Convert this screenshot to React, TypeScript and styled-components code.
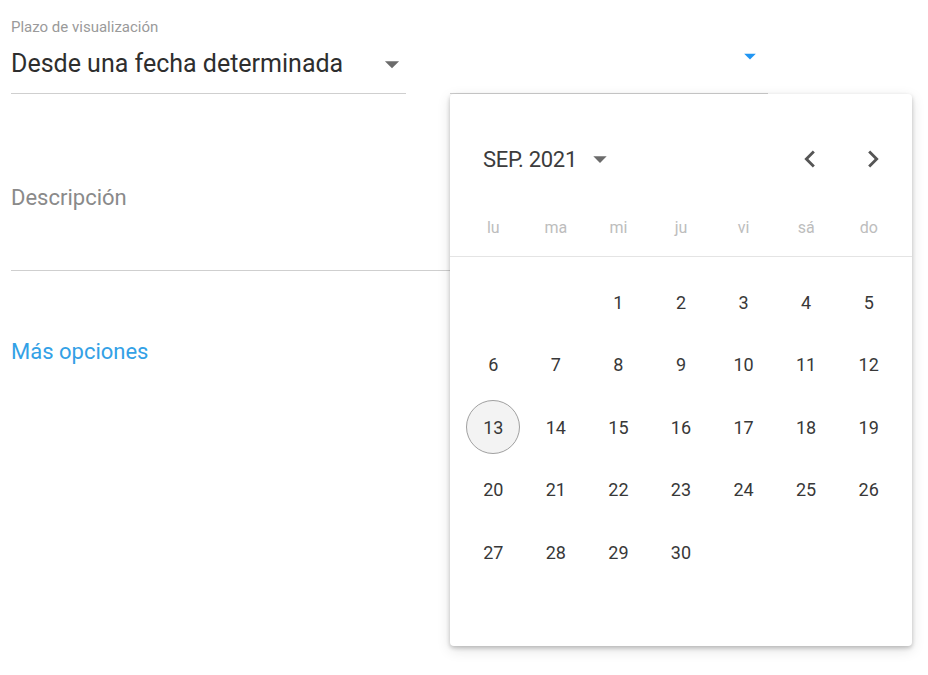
import React from "react";
import styled, { createGlobalStyle } from "styled-components";

const Global = createGlobalStyle`
  html, body { margin: 0; padding: 0; background: #fff; }
  body { font-family: Roboto, "Noto Sans", Arial, sans-serif; -webkit-font-smoothing: antialiased; }
  * { box-sizing: border-box; }
`;

const Page = styled.div`
  position: relative;
  width: 928px;
  height: 675px;
  padding: 18px 0 0 11px;
  overflow: hidden;
`;

const Label = styled.div`
  font-size: 15px;
  line-height: 18px;
  color: #9a9a9a;
`;

const FieldRow = styled.div`
  display: flex;
  align-items: flex-end;
`;

const SelectField = styled.div<{ $width: number; $ml?: number }>`
  position: relative;
  width: ${(p) => p.$width}px;
  margin-left: ${(p) => p.$ml ?? 0}px;
  height: 58px;
  display: flex;
  align-items: flex-start;
  justify-content: space-between;
  padding-top: 14px;
  border-bottom: 1px solid #cfcfcf;
`;

const SelectText = styled.div`
  font-size: 25px;
  line-height: 28px;
  color: #2e2e2e;
`;

const ArrowBox = styled.div<{ $top: number; $right: number }>`
  position: absolute;
  top: ${(p) => p.$top}px;
  right: ${(p) => p.$right}px;
  display: flex;
`;

const DescField = styled.div`
  width: 757px;
  height: 177px;
  padding-top: 91px;
  border-bottom: 1px solid #cfcfcf;
  font-size: 22px;
  line-height: 26px;
  color: #8a8a8a;
`;

const MoreLink = styled.a`
  display: block;
  margin-top: 68px;
  font-size: 22px;
  line-height: 26px;
  color: #33a1e6;
  text-decoration: none;
  cursor: pointer;
`;

const Popup = styled.div`
  position: absolute;
  left: 450px;
  top: 94px;
  width: 462px;
  height: 552px;
  background: #fff;
  border-radius: 4px;
  box-shadow: 0 2px 4px rgba(0, 0, 0, 0.22), 0 4px 14px rgba(0, 0, 0, 0.12);
  display: flex;
  flex-direction: column;
`;

const Header = styled.div`
  height: 40px;
  margin-top: 45px;
  padding: 0 22px 0 33px;
  display: flex;
  align-items: center;
`;

const MonthButton = styled.div`
  display: flex;
  align-items: center;
  gap: 7px;
  font-size: 22px;
  color: #3c3c3c;
  letter-spacing: -0.3px;
`;

const NavGroup = styled.div`
  margin-left: auto;
  display: flex;
  gap: 29px;
`;

const NavButton = styled.div`
  width: 34px;
  height: 34px;
  display: flex;
  align-items: center;
  justify-content: center;
`;

const WeekRow = styled.div`
  margin-top: 28px;
  height: 40px;
  padding: 0 12px 9px;
  display: grid;
  grid-template-columns: repeat(7, 1fr);
  align-items: center;
  border-bottom: 1px solid #e4e4e4;
  box-sizing: content-box;
`;

const WeekDay = styled.div`
  text-align: center;
  font-size: 16px;
  color: #bdbdbd;
`;

const DaysGrid = styled.div`
  padding: 14px 12px 0;
  display: grid;
  grid-template-columns: repeat(7, 1fr);
  grid-auto-rows: 62.5px;
`;

const DayCell = styled.div`
  display: flex;
  align-items: center;
  justify-content: center;
`;

const Day = styled.div<{ $selected?: boolean }>`
  width: 54px;
  height: 54px;
  border-radius: 50%;
  display: flex;
  align-items: center;
  justify-content: center;
  font-size: 18px;
  color: #383838;
  background: ${(p) => (p.$selected ? "#f3f3f3" : "transparent")};
  border: 1px solid ${(p) => (p.$selected ? "#a0a0a0" : "transparent")};
`;

const DropArrow = ({ size, color }: { size: number; color: string }) => (
  <svg width={size} height={size} viewBox="0 0 24 24">
    <path d="M7 10l5 5 5-5z" fill={color} />
  </svg>
);

const ChevronLeft = () => (
  <svg width="34" height="34" viewBox="0 0 24 24">
    <path d="M15.41 7.41L14 6l-6 6 6 6 1.41-1.41L10.83 12z" fill="#555" />
  </svg>
);

const ChevronRight = () => (
  <svg width="34" height="34" viewBox="0 0 24 24">
    <path d="M10 6L8.59 7.41 13.17 12l-4.58 4.59L10 18l6-6z" fill="#555" />
  </svg>
);

const weekDays = ["lu", "ma", "mi", "ju", "vi", "sá", "do"];
const days: (number | null)[] = [null, null, ...Array.from({ length: 30 }, (_, i) => i + 1)];

export default function App() {
  return (
    <>
      <Global />
      <Page>
        <Label>Plazo de visualización</Label>
        <FieldRow>
          <SelectField $width={395}>
            <SelectText>Desde una fecha determinada</SelectText>
            <ArrowBox $top={11} $right={-3}>
              <DropArrow size={34} color="#6b6b6b" />
            </ArrowBox>
          </SelectField>
          <SelectField $width={318} $ml={44}>
            <ArrowBox $top={6} $right={4}>
              <DropArrow size={28} color="#2196f3" />
            </ArrowBox>
          </SelectField>
        </FieldRow>
        <DescField>Descripción</DescField>
        <MoreLink>Más opciones</MoreLink>

        <Popup>
          <Header>
            <MonthButton>
              SEP. 2021
              <DropArrow size={32} color="#6b6b6b" />
            </MonthButton>
            <NavGroup>
              <NavButton>
                <ChevronLeft />
              </NavButton>
              <NavButton>
                <ChevronRight />
              </NavButton>
            </NavGroup>
          </Header>
          <WeekRow>
            {weekDays.map((d) => (
              <WeekDay key={d}>{d}</WeekDay>
            ))}
          </WeekRow>
          <DaysGrid>
            {days.map((d, i) => (
              <DayCell key={i}>{d !== null && <Day $selected={d === 13}>{d}</Day>}</DayCell>
            ))}
          </DaysGrid>
        </Popup>
      </Page>
    </>
  );
}
